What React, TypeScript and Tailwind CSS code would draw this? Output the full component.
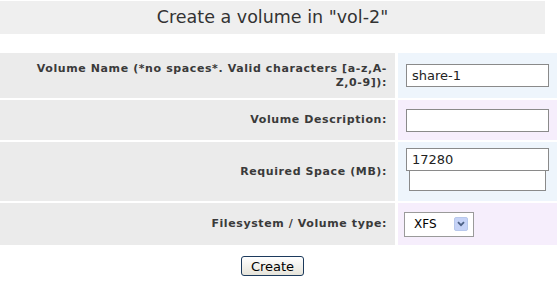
export default function App() {
  const labelCell =
    'flex items-center justify-end bg-[#ebebeb] pr-[8px] text-right text-[11px] font-bold leading-[14px] tracking-[0.6px] text-[#3a3a3a]';
  const textInput =
    'block h-[23px] w-[143px] border border-[#8a8a8a] bg-white px-[5px] text-[13px] text-[#222] outline-none';

  return (
    <div className="h-[289px] w-[559px] bg-white font-['DejaVu_Sans',Verdana,sans-serif]">
      {/* Header */}
      <div className="pt-[1px]">
        <div className="flex h-[33px] w-[545px] items-center justify-center bg-[#efefef] text-[17.5px] text-[#333]">
          Create a volume in "vol-2"
        </div>
      </div>

      {/* Form table */}
      <div className="mt-[19px] grid w-[557px] grid-cols-[395px_159px] grid-rows-[45px_40px_59px_42px] gap-x-[3px] gap-y-[2px]">
        <div className={labelCell}>
          <div>
            <div>Volume Name (*no spaces*. Valid characters [a-z,A-</div>
            <div>Z,0-9]):</div>
          </div>
        </div>
        <div className="flex items-center bg-[#eef5fc] pl-[8px]">
          <input className={textInput} defaultValue="share-1" />
        </div>

        <div className={labelCell}>Volume Description:</div>
        <div className="flex items-center bg-[#f6eefc] pl-[8px]">
          <input className={textInput} defaultValue="" />
        </div>

        <div className={labelCell}>Required Space (MB):</div>
        <div className="bg-[#eef5fc] pl-[8px] pt-[6px]">
          <input className={textInput} defaultValue="17280" />
          <div className="ml-[3px] h-[20px] w-[137px] border border-t-0 border-[#8a8a8a] bg-white" />
        </div>

        <div className={labelCell}>Filesystem / Volume type:</div>
        <div className="flex items-center bg-[#f6eefc] pl-[6px]">
          <div className="flex h-[25px] w-[70px] items-center justify-between border border-[#9a9a9a] bg-white pl-[9px] pr-[5px] text-[12px] text-black">
            <span>XFS</span>
            <span className="flex h-[14px] w-[14px] items-center justify-center rounded-[2px] border border-[#b8c8ec] bg-[#c6d3f7]">
              <svg width="8" height="6" viewBox="0 0 8 6">
                <path d="M1 1.2 L4 4.2 L7 1.2" fill="none" stroke="#4d6185" strokeWidth="1.8" />
              </svg>
            </span>
          </div>
        </div>
      </div>

      {/* Submit */}
      <div className="mt-[11px] flex w-[545px] justify-center">
        <button className="h-[20px] w-[63px] rounded-[3px] border border-[#1c3a5c] bg-gradient-to-b from-white to-[#e6e4da] text-[13px] leading-none text-black">
          Create
        </button>
      </div>
    </div>
  );
}
